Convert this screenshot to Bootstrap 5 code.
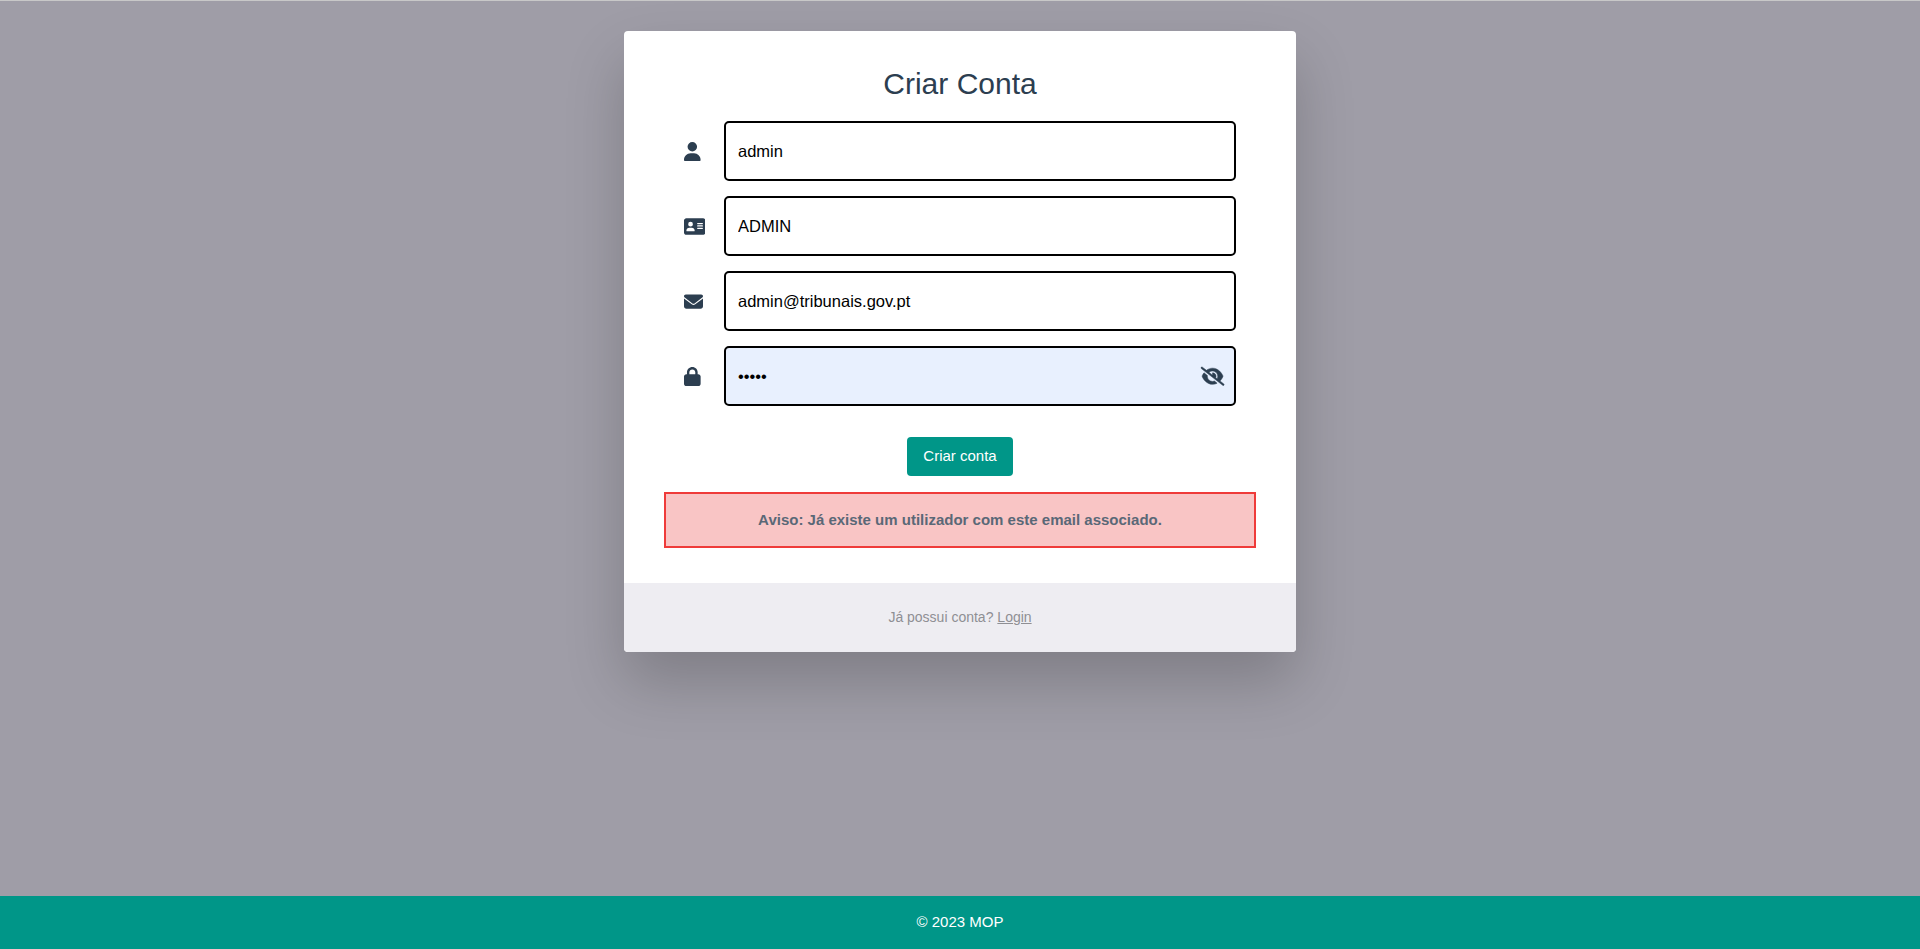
<!DOCTYPE html>
<html lang="pt">
<head>
<meta charset="utf-8">
<meta name="viewport" content="width=device-width, initial-scale=1">
<title>Criar Conta</title>
<link href="https://cdn.jsdelivr.net/npm/bootstrap@5.3.0/dist/css/bootstrap.min.css" rel="stylesheet">
<style>
  body { font-family: "Liberation Sans", Arial, sans-serif; font-size: 15px; background: #9f9da7; border-top: 1px solid #c8c8c8; }
  .signup { width: 35%; margin-top: 30px; border: 0; border-radius: 4px; box-shadow: 0 30px 60px 0 rgba(0,0,0,.2); overflow: hidden; }
  .signup .card-body { padding: 35px 40px; }
  .signup h1 { font-size: 30px; line-height: 36px; color: #2c3e50; margin-bottom: 19px; }
  .field { height: 60px; margin: 0 20px 15px; }
  .field-icon { width: 40px; }
  .field svg { height: 19px; fill: #2c3e50; display: block; }
  .field .form-control { height: 60px; border: 2px solid #000; border-radius: 5px; padding: 0 12px; font-size: 16.5px; color: #000; }
  .field .form-control[type=password] { background: #e8f0fe; padding-top: 1px; }
  .field .toggle-eye { right: 12px; top: 20.5px; height: 18.5px; stroke: #2c3e50; stroke-width: 14px; overflow: visible; }
  .btn-teal, .btn-teal:hover { background: #009688; color: #fff; border: 0; border-radius: 4px; font-size: 15px; line-height: 23px; padding: 7px 16px 9px; }
  .warning { border: 2px solid #ef3b3a; background: #f9c5c5; color: #5a6877; height: 56px; }
  .signup .card-footer { background: #eeedf2; color: #8f8f94; border: 0; height: 69px; font-size: 14px; border-radius: 0; }
  .page-footer { background: #009688; height: 53px; }
</style>
</head>
<body class="d-flex flex-column min-vh-100">
<main class="flex-grow-1 d-flex justify-content-center align-items-start">
  <div class="card signup">
    <form class="card-body text-center" onsubmit="return false">
      <h1 class="fw-normal">Criar Conta</h1>
      <div class="field d-flex align-items-center">
        <div class="field-icon flex-shrink-0"><svg viewBox="0 0 448 512"><path d="M224 256A128 128 0 1 0 224 0a128 128 0 1 0 0 256zm-45.700 48C79.800 304 0 383.800 0 482.300C0 498.700 13.300 512 29.700 512H418.300c16.400 0 29.700-13.300 29.700-29.700C448 383.800 368.200 304 269.700 304H178.300z"/></svg></div>
        <input class="form-control" type="text" value="admin" aria-label="Utilizador">
      </div>
      <div class="field d-flex align-items-center">
        <div class="field-icon flex-shrink-0"><svg viewBox="0 0 576 512"><path d="M64 32C28.700 32 0 60.700 0 96V416c0 35.300 28.700 64 64 64H512c35.300 0 64-28.700 64-64V96c0-35.300-28.700-64-64-64H64zm80 256h64c44.200 0 80 35.800 80 80c0 8.800-7.200 16-16 16H80c-8.800 0-16-7.200-16-16c0-44.200 35.800-80 80-80zm-32-96a64 64 0 1 1 128 0 64 64 0 1 1 -128 0zm256-32H496c8.800 0 16 7.200 16 16s-7.200 16-16 16H368c-8.800 0-16-7.200-16-16s7.200-16 16-16zm0 64H496c8.800 0 16 7.200 16 16s-7.200 16-16 16H368c-8.800 0-16-7.200-16-16s7.200-16 16-16zm0 64H496c8.800 0 16 7.200 16 16s-7.200 16-16 16H368c-8.800 0-16-7.200-16-16s7.200-16 16-16z"/></svg></div>
        <input class="form-control" type="text" value="ADMIN" aria-label="Nome">
      </div>
      <div class="field d-flex align-items-center">
        <div class="field-icon flex-shrink-0"><svg viewBox="0 0 512 512"><path d="M48 64C21.500 64 0 85.500 0 112c0 15.100 7.100 29.300 19.200 38.400L236.800 313.600c11.400 8.500 27 8.500 38.400 0L492.800 150.400c12.100-9.100 19.200-23.300 19.200-38.400c0-26.500-21.500-48-48-48H48zM0 176V384c0 35.300 28.700 64 64 64H448c35.300 0 64-28.700 64-64V176L294.400 339.200c-22.800 17.100-54 17.100-76.800 0L0 176z"/></svg></div>
        <input class="form-control" type="text" value="admin@tribunais.gov.pt" aria-label="Email">
      </div>
      <div class="field d-flex align-items-center position-relative">
        <div class="field-icon flex-shrink-0"><svg viewBox="0 0 448 512"><path d="M144 144v48H304V144c0-44.200-35.800-80-80-80s-80 35.800-80 80zM80 192V144C80 64.500 144.500 0 224 0s144 64.500 144 144v48h16c35.300 0 64 28.700 64 64V448c0 35.300-28.700 64-64 64H64c-35.300 0-64-28.700-64-64V256c0-35.300 28.700-64 64-64H80z"/></svg></div>
        <input class="form-control" type="password" value="admin" aria-label="Palavra-passe">
        <svg class="toggle-eye position-absolute" viewBox="0 0 640 512"><path d="M38.800 5.100C28.400-3.100 13.300-1.200 5.100 9.200S-1.200 34.700 9.200 42.900l592 464c10.400 8.200 25.500 6.300 33.700-4.100s6.300-25.500-4.100-33.700L525.600 386.700c39.600-40.600 66.400-86.100 79.900-118.400c3.300-7.900 3.300-16.700 0-24.600c-14.900-35.700-46.200-87.700-93-131.100C465.500 68.800 400.800 32 320 32c-68.200 0-125 26.300-169.300 60.800L38.800 5.100zM223.100 149.500C248.600 126.200 282.700 112 320 112c79.500 0 144 64.500 144 144c0 24.900-6.300 48.300-17.400 68.700L408 294.500c8.400-19.300 10.600-41.400 4.800-63.300c-11.100-41.500-47.800-69.400-88.600-71.100c-5.800-.2-9.200 6.100-7.400 11.700c2.100 6.400 3.300 13.200 3.300 20.300c0 10.200-2.400 19.800-6.600 28.300l-90.300-70.800zM373 389.900c-16.400 6.500-34.300 10.100-53 10.100c-79.500 0-144-64.500-144-144c0-6.900 .5-13.600 1.400-20.200L83.100 161.500C60.300 191.200 44 220.800 34.500 243.700c-3.300 7.900-3.300 16.700 0 24.600c14.900 35.700 46.200 87.700 93 131.100C174.500 443.200 239.200 480 320 480c47.800 0 89.900-12.900 126.200-32.500L373 389.900z"/></svg>
      </div>
      <button class="btn btn-teal mt-3 mb-3" type="submit">Criar conta</button>
      <div class="warning d-flex align-items-center justify-content-center fw-bold">Aviso: Já existe um utilizador com este email associado.</div>
    </form>
    <div class="card-footer d-flex align-items-center justify-content-center"><span>Já possui conta? <a class="text-reset" href="#">Login</a></span></div>
  </div>
</main>
<footer class="page-footer text-white d-flex align-items-center justify-content-center">© 2023 MOP</footer>
<script src="https://cdn.jsdelivr.net/npm/bootstrap@5.3.0/dist/js/bootstrap.bundle.min.js"></script>
</body>
</html>
